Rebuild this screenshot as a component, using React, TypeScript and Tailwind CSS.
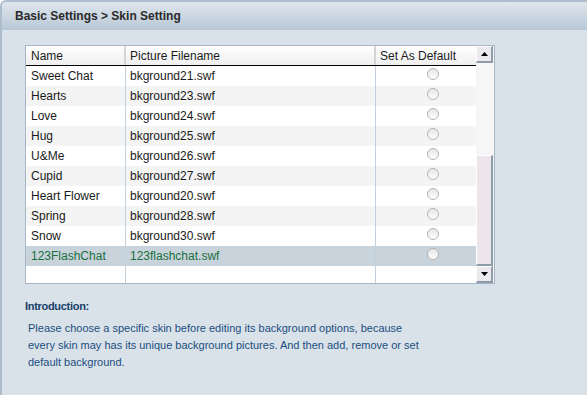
import React from "react";

const rows = [
  ["Sweet Chat", "bkground21.swf"],
  ["Hearts", "bkground23.swf"],
  ["Love", "bkground24.swf"],
  ["Hug", "bkground25.swf"],
  ["U&Me", "bkground26.swf"],
  ["Cupid", "bkground27.swf"],
  ["Heart Flower", "bkground20.swf"],
  ["Spring", "bkground28.swf"],
  ["Snow", "bkground30.swf"],
  ["123FlashChat", "123flashchat.swf"],
];

function Radio() {
  return (
    <div className="w-[12px] h-[12px] rounded-full border border-[#b4b4b4] bg-gradient-to-b from-[#e6e6e6] to-[#ffffff]" />
  );
}

function Arrow({ up }: { up: boolean }) {
  return (
    <svg width="7" height="4" viewBox="0 0 7 4">
      {up ? <polygon points="3.5,0 7,4 0,4" fill="#000" /> : <polygon points="0,0 7,0 3.5,4" fill="#000" />}
    </svg>
  );
}

function ScrollButton({ up }: { up: boolean }) {
  return (
    <div className="h-[17px] w-[17px] flex items-center justify-center bg-[#ece9ee] border-t border-l border-t-[#ffffff] border-l-[#ffffff] border-r-2 border-b-2 border-r-[#8e9caa] border-b-[#8e9caa]">
      <Arrow up={up} />
    </div>
  );
}

export default function App() {
  return (
    <div
      className="w-[587px] h-[395px] bg-[#d9e1e9] border-t-2 border-l-2 border-[#aebdcc] rounded-tl-[6px] overflow-hidden text-[12px]"
      style={{ fontFamily: '"Liberation Sans", Arial, sans-serif' }}
    >
      <div className="h-[28px] flex items-center pl-[13px] bg-gradient-to-b from-[#dfe6ed] to-[#b8c8d6] font-bold text-[12px] text-[#2a2a2a]">
        Basic Settings &gt; Skin Setting
      </div>

      <div className="ml-[23px] mt-[15px] w-[470px] h-[239px] border border-[#a7b6c4] bg-white flex">
        <div className="w-[450px] flex flex-col">
          <div className="h-[20px] flex border-b border-black bg-gradient-to-b from-[#ffffff] to-[#efefef] text-[#1a1a1a]">
            <div className="w-[100px] pl-[5px] flex items-center border-r-2 border-r-[#d4d4d4]">Name</div>
            <div className="w-[250px] pl-[4px] flex items-center border-r-2 border-r-[#d4d4d4]">Picture Filename</div>
            <div className="w-[100px] pl-[4px] flex items-center">Set As Default</div>
          </div>
          {rows.map(([name, file], i) => {
            const selected = i === rows.length - 1;
            const bg = selected ? "bg-[#c9d3dc] text-[#17703c]" : i % 2 === 1 ? "bg-[#f4f4f4] text-[#1a1a1a]" : "bg-white text-[#1a1a1a]";
            return (
              <div key={name} className={`h-[20px] flex ${bg}`}>
                <div className="w-[100px] pl-[5px] flex items-center border-r border-[#c3cfda]">{name}</div>
                <div className="w-[250px] pl-[4px] flex items-center border-r border-[#c3cfda]">{file}</div>
                <div className="w-[100px] pl-[51px] pt-[2px]">
                  <Radio />
                </div>
              </div>
            );
          })}
          <div className="flex-1 flex bg-white">
            <div className="w-[100px] border-r border-[#c3cfda]" />
            <div className="w-[250px] border-r border-[#c3cfda]" />
            <div className="w-[100px]" />
          </div>
        </div>
        <div className="w-[18px] flex flex-col bg-[#f6f6f6]">
          <ScrollButton up={true} />
          <div className="flex-1 flex flex-col">
            <div className="h-[92px]" />
            <div className="flex-1 w-[17px] bg-[#ece6ec] border-l border-t border-l-[#ffffff] border-t-[#ffffff] border-r-2 border-b-2 border-r-[#8e9caa] border-b-[#8e9caa]" />
          </div>
          <ScrollButton up={false} />
        </div>
      </div>

      <div className="ml-[23px] mt-[14px] font-bold text-[11px] tracking-[-0.3px] text-[#17406a] leading-[17px]">Introduction:</div>
      <div className="ml-[26px] mt-[5px] w-[395px] text-[11px] text-[#1b4f80] leading-[17px]">
        Please choose a specific skin before editing its background options, because every skin may has its unique background pictures. And then add, remove or set default background.
      </div>
    </div>
  );
}
